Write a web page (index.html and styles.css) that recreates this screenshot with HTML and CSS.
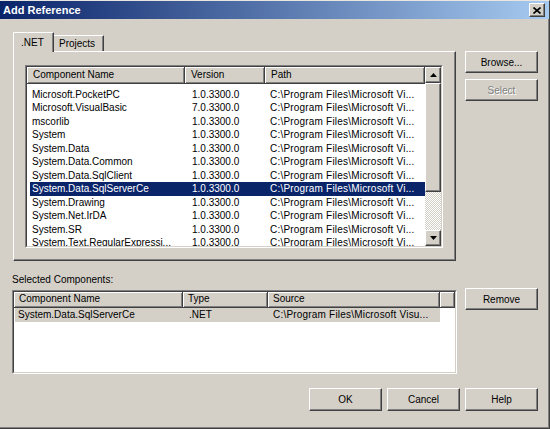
FILE: index.html
```html
<!DOCTYPE html>
<html>
<head>
<meta charset="utf-8">
<title>Add Reference</title>
<link rel="stylesheet" href="styles.css">
</head>
<body>
<div class="window">
  <div class="titlebar">
    <span class="title">Add Reference</span>
    <div class="close"><svg width="8" height="7" viewBox="0 0 8 7"><path d="M0.5 0.5 L7.5 6.5 M7.5 0.5 L0.5 6.5" stroke="#000" stroke-width="1.6" fill="none"/></svg></div>
  </div>
  <div class="content">
    <div class="tabarea">
      <div class="tabs">
        <div class="tab active">.NET</div>
        <div class="tab">Projects</div>
      </div>
      <div class="panel">
        <div class="sunken list-top">
          <div class="sunken-in">
            <div class="cols">
              <div class="hdr">
                <div class="hc w158">Component Name</div>
                <div class="hc w80">Version</div>
                <div class="hc grow">Path</div>
              </div>
              <div class="rows">
                <div class="row"><span class="c1">Microsoft.PocketPC</span><span class="c2">1.0.3300.0</span><span class="c3 path">C:\Program Files\Microsoft Vi...</span></div>
                <div class="row"><span class="c1">Microsoft.VisualBasic</span><span class="c2">7.0.3300.0</span><span class="c3 path">C:\Program Files\Microsoft Vi...</span></div>
                <div class="row"><span class="c1">mscorlib</span><span class="c2">1.0.3300.0</span><span class="c3 path">C:\Program Files\Microsoft Vi...</span></div>
                <div class="row"><span class="c1">System</span><span class="c2">1.0.3300.0</span><span class="c3 path">C:\Program Files\Microsoft Vi...</span></div>
                <div class="row"><span class="c1">System.Data</span><span class="c2">1.0.3300.0</span><span class="c3 path">C:\Program Files\Microsoft Vi...</span></div>
                <div class="row"><span class="c1">System.Data.Common</span><span class="c2">1.0.3300.0</span><span class="c3 path">C:\Program Files\Microsoft Vi...</span></div>
                <div class="row"><span class="c1">System.Data.SqlClient</span><span class="c2">1.0.3300.0</span><span class="c3 path">C:\Program Files\Microsoft Vi...</span></div>
                <div class="row sel"><span class="c1">System.Data.SqlServerCe</span><span class="c2">1.0.3300.0</span><span class="c3 path">C:\Program Files\Microsoft Vi...</span></div>
                <div class="row"><span class="c1">System.Drawing</span><span class="c2">1.0.3300.0</span><span class="c3 path">C:\Program Files\Microsoft Vi...</span></div>
                <div class="row"><span class="c1">System.Net.IrDA</span><span class="c2">1.0.3300.0</span><span class="c3 path">C:\Program Files\Microsoft Vi...</span></div>
                <div class="row"><span class="c1">System.SR</span><span class="c2">1.0.3300.0</span><span class="c3 path">C:\Program Files\Microsoft Vi...</span></div>
                <div class="row"><span class="c1">System.Text.RegularExpressi...</span><span class="c2">1.0.3300.0</span><span class="c3 path">C:\Program Files\Microsoft Vi...</span></div>
              </div>
            </div>
            <div class="sb">
              <div class="sb-btn"><svg width="7" height="4" viewBox="0 0 7 4"><path d="M3.5 0 L7 4 L0 4 Z" fill="#000"/></svg></div>
              <div class="thumb"></div>
              <div class="track"></div>
              <div class="sb-btn"><svg width="7" height="4" viewBox="0 0 7 4"><path d="M0 0 L7 0 L3.5 4 Z" fill="#000"/></svg></div>
            </div>
          </div>
        </div>
      </div>
    </div>
    <div class="side">
      <button class="btn">Browse...</button>
      <button class="btn" disabled>Select</button>
    </div>

    <div class="label">Selected Components:</div>

    <div class="sunken list-bottom">
      <div class="sunken-in col">
        <div class="hdr hdr2">
          <div class="hc w169">Component Name</div>
          <div class="hc w85">Type</div>
          <div class="hc w172">Source</div>
          <div class="hc grow"></div>
        </div>
        <div class="row2"><span class="d1">System.Data.SqlServerCe</span><span class="d2">.NET</span><span class="d3 path">C:\Program Files\Microsoft Visu...</span></div>
      </div>
    </div>
    <div class="side side2">
      <button class="btn">Remove</button>
    </div>

    <div class="footer">
      <button class="btn tall">OK</button>
      <button class="btn tall">Cancel</button>
      <button class="btn tall">Help</button>
    </div>
  </div>
</div>
</body>
</html>
```

FILE: styles.css
```css
* { box-sizing: border-box; }
html, body { margin: 0; padding: 0; }
body {
  width: 550px;
  height: 429px;
  overflow: hidden;
  background: #d4d0c8;
  font-family: "Liberation Sans", Arial, sans-serif;
  font-size: 10px;
  color: #000;
}
.window {
  width: 550px;
  height: 429px;
  background: #d4d0c8;
  border-top: 1px solid #e8e6e0;
  border-right: 1px solid #404040;
  border-bottom: 1px solid #404040;
  box-shadow: inset -1px -1px #808080;
  display: flex;
  flex-direction: column;
}
.titlebar {
  height: 18px;
  flex: none;
  background: linear-gradient(to right, #0a246a, #a6caf0);
  display: flex;
  align-items: center;
  justify-content: space-between;
  padding: 0 4px 0 3px;
}
.title {
  color: #fff;
  font-weight: bold;
  font-size: 11px;
}
.close {
  width: 16px;
  height: 14px;
  background: #d4d0c8;
  border: 1px solid;
  border-color: #fff #404040 #404040 #fff;
  box-shadow: inset -1px -1px #808080;
  display: flex;
  align-items: center;
  justify-content: center;
}
.close svg { display: block; }
.content {
  flex: 1;
  padding: 13px 11px 0 12px;
  display: grid;
  grid-template-columns: 445px 73px;
  column-gap: 8px;
  align-content: start;
  align-items: start;
}
.tabarea { margin: 0 1px; }
.tabs {
  display: flex;
  align-items: flex-end;
  height: 19px;
}
.tab {
  height: 16px;
  width: 50px;
  padding-left: 5px;
  line-height: 15px;
  background: #d4d0c8;
  border-top: 1px solid #fff;
  border-right: 1px solid #404040;
  box-shadow: inset -1px 0 #808080;
}
.tab.active {
  height: 20px;
  width: 41px;
  margin-bottom: -1px;
  padding-left: 7px;
  line-height: 19px;
  border-left: 1px solid #fff;
  position: relative;
  z-index: 1;
}
.panel {
  height: 210px;
  border: 1px solid;
  border-color: #fff #404040 #404040 #fff;
  box-shadow: inset -1px -1px #808080;
  padding: 13px 12px 12px 11px;
}
.sunken {
  border: 1px solid;
  border-color: #808080 #fff #fff #808080;
}
.sunken-in {
  height: 100%;
  border: 1px solid;
  border-color: #404040 #d4d0c8 #d4d0c8 #404040;
  background: #fff;
  display: flex;
  overflow: hidden;
}
.sunken-in.col { flex-direction: column; }
.list-top { height: 183px; }
.cols {
  flex: 1;
  min-width: 0;
  display: flex;
  flex-direction: column;
  overflow: hidden;
}
.hdr {
  display: flex;
  height: 17px;
  flex: none;
}
.hdr2 { height: 16px; }
.hc {
  height: 100%;
  background: #d4d0c8;
  border-right: 1px solid #404040;
  border-bottom: 1px solid #404040;
  box-shadow: inset 1px 1px #fff, inset -1px -1px #808080;
  padding-left: 6px;
  line-height: 15px;
  white-space: nowrap;
  overflow: hidden;
  flex: none;
}
.hdr2 .hc { line-height: 14px; padding-left: 5px; }
.w158 { width: 158px; }
.w80 { width: 80px; }
.w169 { width: 169px; }
.w85 { width: 85px; }
.w172 { width: 172px; }
.hc.grow { flex: 1; }
.rows { padding-top: 3.5px; }
.row {
  display: flex;
  height: 13.5px;
  line-height: 13.5px;
  white-space: nowrap;
}
.row .c1 { width: 158px; padding-left: 5px; flex: none; }
.row .c2 { width: 80px; padding-left: 7px; flex: none; }
.row .c3 { flex: 1; padding-left: 5px; overflow: hidden; }
.path { letter-spacing: 0.2px; }
.row.sel {
  background: linear-gradient(to right, transparent 3px, #0a246a 3px);
  color: #fff;
}
.sb {
  width: 16px;
  flex: none;
  display: flex;
  flex-direction: column;
}
.sb-btn, .thumb {
  background: #d4d0c8;
  border: 1px solid;
  border-color: #fff #404040 #404040 #fff;
  box-shadow: inset -1px -1px #808080;
}
.sb-btn {
  height: 16px;
  flex: none;
  display: flex;
  align-items: center;
  justify-content: center;
}
.sb-btn svg { display: block; }
.thumb { height: 109px; flex: none; }
.track {
  flex: 1;
  background: repeating-conic-gradient(#fff 0 25%, #d4d0c8 0 50%) 0 0 / 2px 2px;
}
.side {
  display: flex;
  flex-direction: column;
  gap: 6px;
  padding-top: 19px;
}
.side2 {
  padding-top: 0;
  margin-top: -2px;
}
.btn {
  width: 73px;
  height: 22px;
  padding: 0;
  font-family: inherit;
  font-size: 10px;
  color: #000;
  background: #d4d0c8;
  border: 1px solid;
  border-color: #fff #404040 #404040 #fff;
  box-shadow: inset -1px -1px #808080;
}
.btn.tall { height: 23px; }
.btn:disabled {
  color: #808080;
  text-shadow: 1px 1px #fff;
}
.label {
  grid-column: 1 / span 2;
  margin: 12px 0 4px 0;
  height: 13px;
  line-height: 13px;
}
.list-bottom { height: 84px; }
.row2 {
  display: flex;
  height: 14px;
  line-height: 14px;
  white-space: nowrap;
  background: linear-gradient(to right, transparent 1px, #d4d0c8 1px, #d4d0c8 426px, transparent 426px);
}
.d1 { width: 169px; padding-left: 4px; flex: none; }
.d2 { width: 85px; padding-left: 6px; flex: none; }
.d3 { flex: 1; padding-left: 5px; }
.footer {
  grid-column: 1 / span 2;
  display: flex;
  justify-content: flex-end;
  gap: 5px;
  margin-top: 14px;
}
```
